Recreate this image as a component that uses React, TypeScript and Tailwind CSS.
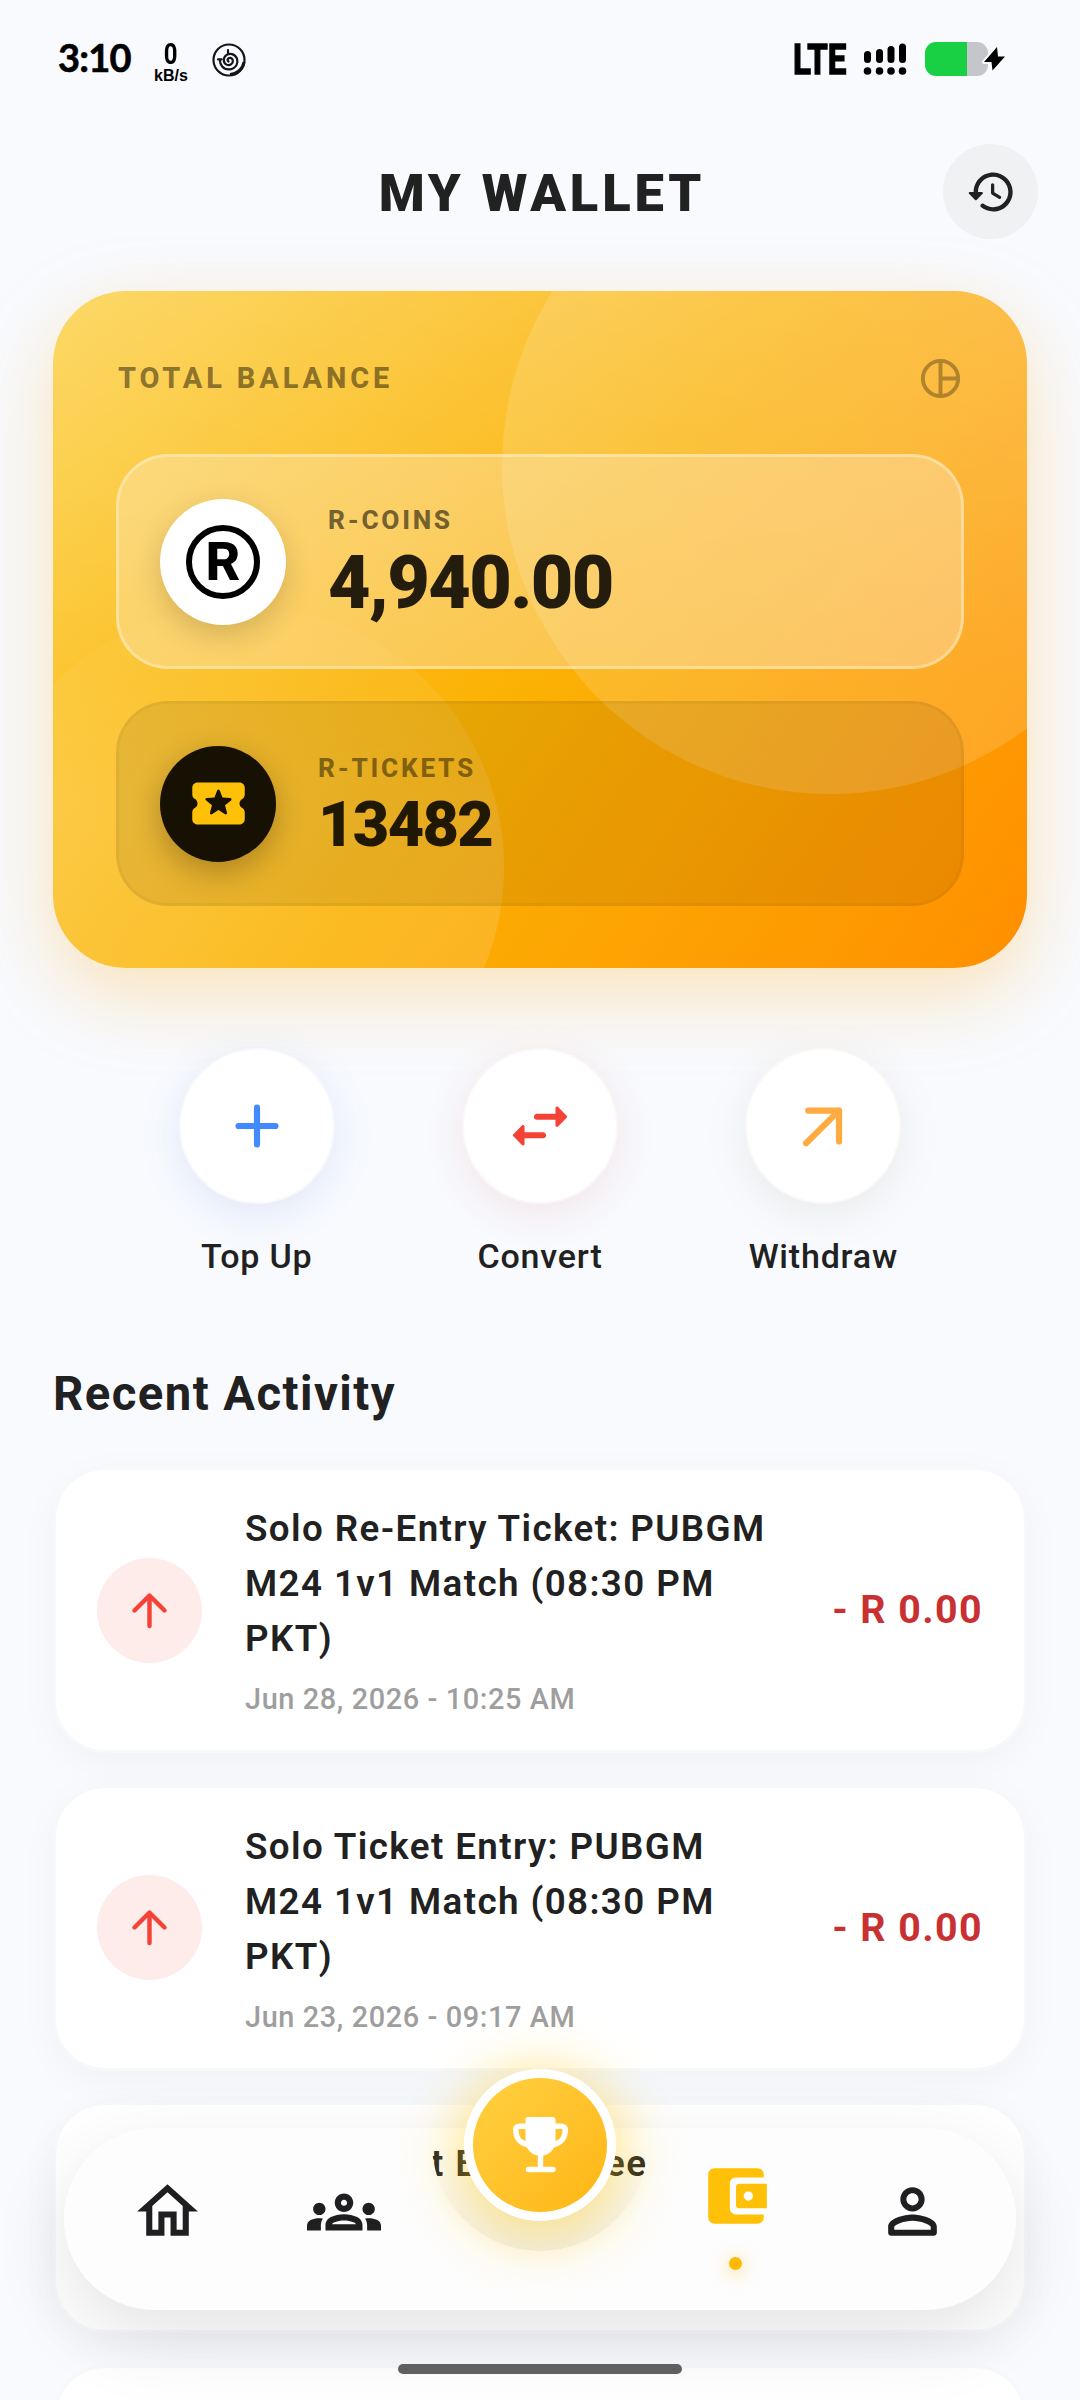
import type { ReactNode } from 'react';

interface Transaction {
  title: string;
  date: string;
  amount: string;
}

const transactions: Transaction[] = [
  {
    title: 'Solo Re-Entry Ticket: PUBGM M24 1v1 Match (08:30 PM PKT)',
    date: 'Jun 28, 2026 - 10:25 AM',
    amount: '- R 0.00',
  },
  {
    title: 'Solo Ticket Entry: PUBGM M24 1v1 Match (08:30 PM PKT)',
    date: 'Jun 23, 2026 - 09:17 AM',
    amount: '- R 0.00',
  },
];

interface IconProps {
  className?: string;
  children: ReactNode;
}

function Icon({ className, children }: IconProps) {
  return (
    <svg viewBox="0 0 24 24" fill="currentColor" className={className}>
      {children}
    </svg>
  );
}

function StatusBar() {
  return (
    <div className="h-[116px] flex items-start justify-between text-black">
      <div className="flex items-start pl-[58px] pt-[34px]">
        <span className="w-[76px] whitespace-nowrap font-[Lato,sans-serif] font-bold text-[38px] leading-[46px] tracking-[-0.8px] [-webkit-text-stroke:0.6px_black]">3:10</span>
        <div className="ml-[19px] w-[36px] flex flex-col items-center pt-[4px]">
          <span className="font-bold text-[30px] leading-[31px] scale-x-80">0</span>
          <span className="font-['Liberation_Sans',sans-serif] font-bold text-[16px] leading-[13px]">kB/s</span>
        </div>
        <svg viewBox="0 0 36 36" className="ml-[22px] mt-[8px] w-[36px] h-[36px]" fill="none" stroke="#15161c">
          <circle cx="18" cy="18" r="15.5" strokeWidth="2.2" />
          <path
            d="M17.5 19.5c-1.8-1.2-.5-4 1.8-3.6c3 .5 3.4 4.5 1 6.3c-3 2.2-7.3.2-7.5-3.8c-.2-4.5 4.2-7.5 8.3-6.3c5 1.4 6.6 7 4.3 11.2c-3 5-10.5 5.5-14.2 1.2c-1.8-2.2-2.3-4-2.3-6.2M7 17.3h3.5M17 8v4.5"
            strokeWidth="2.2"
            strokeLinecap="round"
          />
          <path d="M33 20c-1 7-7 12-14 12.5" strokeWidth="3" />
        </svg>
      </div>
      <div className="flex items-start pt-[42px] pr-[74px]">
        <div className="w-[56px] h-[34px] mr-[14px]">
          <span className="block origin-left scale-x-[0.77] w-[80px] font-bold text-[43px] leading-[35px] [-webkit-text-stroke:1.5px_black]">LTE</span>
        </div>
        <svg viewBox="0 0 44 34" className="w-[44px] h-[34px] mr-[18px]">
          <rect x="1" y="9" width="7" height="12" rx="3.5" />
          <rect x="13" y="7" width="7" height="14" rx="3.5" />
          <rect x="24.5" y="4" width="7" height="17" rx="3.5" />
          <rect x="36" y="1.5" width="7" height="19.5" rx="3.5" />
          <circle cx="4.5" cy="29" r="3.8" />
          <circle cx="16.5" cy="29" r="3.8" />
          <circle cx="28" cy="29" r="3.8" />
          <circle cx="39.5" cy="29" r="3.8" />
        </svg>
        <svg viewBox="0 0 81 34" className="w-[81px] h-[34px]">
          <path d="M42 0h10a11 11 0 0 1 11 11v12a11 11 0 0 1-11 11h-10z" fill="#c5c6cb" />
          <path d="M42 0H11a11 11 0 0 0-11 11v12a11 11 0 0 0 11 11h31z" fill="#19d045" />
          <path
            d="M72 5L59 20h7.5l1 8.5L80 14.5h-7z"
            fill="black"
            stroke="#f8fafe"
            strokeWidth="4"
            strokeLinejoin="round"
            paintOrder="stroke"
          />
        </svg>
      </div>
    </div>
  );
}

function Header() {
  return (
    <header className="h-[175px] pt-[28px] flex items-start justify-between px-[42px]">
      <div className="w-[96px]" />
      <h1 className="pl-[3px] font-black text-[52.5px] leading-[99px] tracking-[3.9px] text-[#212121]">MY WALLET</h1>
      <div className="w-[95px] h-[95px] rounded-full bg-[#f0f1f3] flex items-center justify-center text-[#212121]">
        <Icon className="w-[52px] h-[52px]">
          <path d="M13.26 3C8.17 2.86 4 6.95 4 12H2.21c-.45 0-.67.54-.35.85l2.79 2.8c.2.2.51.2.71 0l2.79-2.8c.31-.31.09-.85-.36-.85H6c0-3.9 3.18-7.05 7.1-7 3.72.05 6.85 3.18 6.9 6.9.05 3.91-3.1 7.1-7 7.1-1.61 0-3.1-.55-4.28-1.48-.4-.31-.96-.28-1.32.08-.42.42-.39 1.13.08 1.49C9 20.29 10.91 21 13 21c5.05 0 9.14-4.17 9-9.26-.13-4.69-4.05-8.61-8.74-8.74zm-.51 5c-.41 0-.75.34-.75.75v3.68c0 .35.19.68.49.86l3.12 1.85c.36.21.82.09 1.03-.26.21-.36.09-.82-.26-1.03l-2.88-1.71v-3.4c0-.4-.34-.74-.75-.74z" />
        </Icon>
      </div>
    </header>
  );
}

function BalanceCard() {
  return (
    <section className="relative mx-[53px] h-[677px] rounded-[73px] shadow-[0_26px_80px_rgba(255,165,0,0.28)]">
      <div className="relative h-full overflow-hidden rounded-[73px] px-[63px] pt-[63px] bg-[linear-gradient(to_bottom,rgba(255,255,255,0.15),rgba(255,255,255,0)_58%),linear-gradient(124.8deg,#fcd24e_0%,#fbb204_50%,#ff8f00_100%)]">
        <div className="absolute -top-[153px] -right-[131px] w-[656px] h-[656px] rounded-full bg-white/15" />
        <div className="absolute -bottom-[162px] -left-[74px] w-[525px] h-[525px] rounded-full bg-[linear-gradient(to_bottom,rgba(255,255,255,0.02),rgba(255,255,255,0.12)_40%)]" />
        <div className="relative">
          <div className="flex items-center justify-between h-[48px] pt-px">
            <span className="pl-[2px] font-extrabold text-[28.9px] tracking-[3.9px] text-black/45">TOTAL BALANCE</span>
            <svg viewBox="0 0 24 24" className="w-[47px] h-[47px]" fill="none" stroke="rgba(0,0,0,0.3)" strokeWidth="2">
              <path d="M12 3a9 9 0 1 0 0 18a9 9 0 1 0 0-18zM12 4v16M13 12h7" />
            </svg>
          </div>

          <div className="mt-[52px] h-[215px] rounded-[52px] border-[3px] border-[#fff4d0]/45 bg-[#fbeed8]/35 flex items-center pl-[41px]">
            <div className="w-[126px] h-[126px] rounded-full bg-white shadow-[0_10px_30px_rgba(0,0,0,0.16)] flex items-center justify-center">
              <div className="w-[74px] h-[74px] rounded-full border-[6px] border-black flex items-center justify-center">
                <span className="font-extrabold text-[54px] leading-none text-black">R</span>
              </div>
            </div>
            <div className="ml-[42px] pt-[8px]">
              <p className="font-extrabold text-[26.25px] leading-[30px] tracking-[2.7px] text-black/55">R-COINS</p>
              <p className="mt-[4px] font-black text-[73.5px] leading-[88px] tracking-[-1.6px] text-[#241c0c]">4,940.00</p>
            </div>
          </div>

          <div className="mt-[32px] h-[205px] rounded-[52px] border-[3px] border-black/4 bg-black/8 flex items-center pl-[41px]">
            <div className="w-[116px] h-[116px] rounded-full bg-[#171103] shadow-[0_10px_30px_rgba(0,0,0,0.25)] flex items-center justify-center text-[#ffc107]">
              <Icon className="w-[63px] h-[63px]">
                <path d="M20 12c0-.76.43-1.42 1.06-1.76.6-.33.94-1.01.94-1.7V6c0-1.1-.9-2-2-2H4c-1.1 0-1.99.89-1.99 1.99v2.55c0 .69.33 1.37.94 1.69C3.58 10.58 4 11.24 4 12s-.43 1.43-1.06 1.76c-.6.33-.94 1.01-.94 1.7V18c0 1.1.9 2 2 2h16c1.1 0 2-.9 2-2v-2.54c0-.69-.34-1.37-.94-1.7-.63-.34-1.06-1-1.06-1.76zm-5.5 4.1L12 14.5l-2.5 1.61c-.38.24-.87-.11-.75-.55l.75-2.88-2.3-1.88c-.35-.29-.17-.86.29-.89l2.96-.17 1.08-2.75c.17-.42.77-.42.93 0l1.08 2.76 2.96.17c.45.03.64.6.29.89l-2.3 1.88.76 2.86c.12.45-.37.8-.75.55z" />
              </Icon>
            </div>
            <div className="ml-[42px] pt-[8px]">
              <p className="font-extrabold text-[26.25px] leading-[30px] tracking-[2.7px] text-black/45">R-TICKETS</p>
              <p className="mt-[4px] font-black text-[63px] leading-[76px] tracking-[-1.7px] text-[#211803]">13482</p>
            </div>
          </div>
        </div>
      </div>
    </section>
  );
}

function QuickActions() {
  return (
    <section className="relative mt-[80px] px-[115px] grid grid-cols-3">
      <div className="flex flex-col items-center">
        <div className="w-[156px] h-[156px] rounded-full border-2 border-[#f7f9fd] bg-white shadow-[0_10px_40px_rgba(68,110,200,0.13)] flex items-center justify-center">
          <svg viewBox="0 0 24 24" className="w-[74px] h-[74px]" fill="none" stroke="#448aff" strokeWidth="2" strokeLinecap="round">
            <path d="M12 6v12M6 12h12" />
          </svg>
        </div>
        <span className="mt-[32px] font-medium text-[34px] leading-[40px] tracking-[0.8px] text-[#212121]">Top Up</span>
      </div>
      <div className="flex flex-col items-center">
        <div className="w-[156px] h-[156px] rounded-full border-2 border-[#fbf7f9] bg-white shadow-[0_10px_40px_rgba(200,67,54,0.11)] flex items-center justify-center text-[#f44336]">
          <Icon className="w-[74px] h-[74px]">
            <path d="M6.14 11.86l-2.78 2.79c-.19.2-.19.51 0 .71l2.78 2.79c.31.32.85.09.85-.35V16H13c.55 0 1-.45 1-1s-.45-1-1-1H6.99v-1.79c0-.45-.54-.67-.85-.35zm14.51-3.21l-2.78-2.79c-.31-.32-.85-.09-.85.35V8H11c-.55 0-1 .45-1 1s.45 1 1 1h6.01v1.79c0 .45.54.67.85.35l2.78-2.79c.2-.19.2-.51.01-.7z" />
          </Icon>
        </div>
        <span className="mt-[32px] font-medium text-[34px] leading-[40px] tracking-[0.8px] text-[#212121]">Convert</span>
      </div>
      <div className="flex flex-col items-center">
        <div className="w-[156px] h-[156px] rounded-full border-2 border-[#faf9f8] bg-white shadow-[0_10px_40px_rgba(150,130,90,0.13)] flex items-center justify-center">
          <svg viewBox="0 0 24 24" className="w-[74px] h-[74px]" fill="none" stroke="#ffab40" strokeWidth="2" strokeLinecap="round" strokeLinejoin="round">
            <path d="M7.2 7H17.200V17M17.200 7L6.500 17.600" />
          </svg>
        </div>
        <span className="mt-[32px] font-medium text-[34px] leading-[40px] tracking-[0.8px] text-[#212121]">Withdraw</span>
      </div>
    </section>
  );
}

function TransactionCard({ title, date, amount }: Transaction) {
  return (
    <li className="rounded-[52px] border-[3px] border-[#f6f8fa] bg-white bg-clip-padding shadow-[0_10px_40px_rgba(0,0,0,0.035)] flex items-center px-[41px] pt-[31px] pb-[31px]">
      <div className="w-[105px] h-[105px] shrink-0 rounded-full bg-[#feeceb] flex items-center justify-center">
        <svg viewBox="0 0 24 24" className="w-[53px] h-[53px]" fill="none" stroke="#f44336" strokeWidth="2" strokeLinecap="round" strokeLinejoin="round">
          <path d="M12 19V5.500M5.200 12l6.800-6.800l6.800 6.800" />
        </svg>
      </div>
      <div className="ml-[43px] w-[540px]">
        <p className="font-semibold text-[36.75px] leading-[55px] tracking-[1.4px] text-[#212121]">{title}</p>
        <p className="mt-[13px] font-medium text-[28.9px] leading-[40px] tracking-[0.6px] text-[#9e9e9e]">{date}</p>
      </div>
      <span className="ml-auto whitespace-nowrap font-bold text-[39.4px] leading-[46px] tracking-[1.4px] text-[#c93032]">{amount}</span>
    </li>
  );
}

function RecentActivity() {
  return (
    <section className="mt-[83px] px-[53px]">
      <h2 className="font-bold text-[47.25px] leading-[70px] tracking-[1.45px] text-[#212121]">Recent Activity</h2>
      <ul className="mt-[38px] flex flex-col gap-[31.6px]">
        {transactions.map((t) => (
          <TransactionCard key={t.date} {...t} />
        ))}
        <li className="h-[231px] rounded-[52px] border-[3px] border-[#f6f8fa] bg-white bg-clip-padding shadow-[0_10px_40px_rgba(0,0,0,0.035)] pl-[189px] pt-[31px]">
          <p className="font-semibold text-[36.75px] leading-[55px] tracking-[1.4px] text-[#212121]">Solo Ticket Entry: Free</p>
        </li>
        <li className="h-[231px] rounded-[52px] border-[3px] border-[#f6f8fa] bg-white bg-clip-padding" />
      </ul>
    </section>
  );
}

function BottomNav() {
  return (
    <nav className="absolute left-[64px] top-[2128px] w-[952px] h-[182px]">
      <div className="absolute inset-0 rounded-full shadow-[0_26px_80px_rgba(0,0,0,0.11)]" />
      <div className="absolute left-[368px] -top-[93px] w-[216px] h-[216px] rounded-full bg-[linear-gradient(to_bottom,transparent_50%,rgba(0,0,0,0.06)_100%)]" />
      {/* pill with a round notch under the trophy button */}
      <div className="absolute inset-0 rounded-full bg-[#fdfdfd] [mask-image:radial-gradient(circle_at_476px_15px,transparent_107.5px,black_108.5px)]" />
      <div className="relative h-full flex px-[15px] text-[#1f1f21]">
        <div className="w-[177px] flex justify-center pt-[47px]">
          <Icon className="w-[73px] h-[73px]">
            <path d="M12 5.69l5 4.5V18h-2v-6H9v6H7v-7.81l5-4.5M12 3L2 12h3v8h6v-6h2v6h6v-8h3L12 3z" />
          </Icon>
        </div>
        <div className="w-[175px] flex justify-center pt-[47px]">
          <Icon className="w-[74px] h-[74px]">
            <path d="M4 13c1.1 0 2-.9 2-2s-.9-2-2-2-2 .9-2 2 .9 2 2 2zm1.13 1.1c-.37-.06-.74-.1-1.13-.1-.99 0-1.93.21-2.78.58C.48 14.9 0 15.62 0 16.43V18h4.5v-1.61c0-.83.23-1.61.63-2.29zM20 13c1.1 0 2-.9 2-2s-.9-2-2-2-2 .9-2 2 .9 2 2 2zm4 3.43c0-.81-.48-1.53-1.22-1.85-.85-.37-1.79-.58-2.78-.58-.39 0-.76.04-1.13.1.4.68.63 1.46.63 2.29V18H24v-1.57zm-7.76-2.78c-1.17-.52-2.61-.9-4.24-.9s-3.07.39-4.24.9C6.68 14.13 6 15.21 6 16.39V18h12v-1.61c0-1.18-.68-2.26-1.76-2.74zM8.07 16c.09-.23.13-.39.91-.69.97-.38 1.99-.56 3.02-.56s2.05.18 3.02.56c.77.3.81.46.91.69H8.07zM12 8c.55 0 1 .45 1 1s-.45 1-1 1-1-.45-1-1 .45-1 1-1m0-2c-1.66 0-3 1.34-3 3s1.34 3 3 3 3-1.34 3-3-1.34-3-3-3z" />
          </Icon>
        </div>
        <div className="w-[216px]" />
        <div className="w-[177px] flex flex-col items-center pt-[31px] text-[#ffc107]">
          <Icon className="w-[74px] h-[74px]">
            <path d="M10 16V8c0-1.1.89-2 2-2h9V5c0-1.1-.9-2-2-2H5c-1.11 0-2 .9-2 2v14c0 1.1.89 2 2 2h14c1.1 0 2-.9 2-2v-1h-9c-1.11 0-2-.9-2-2zm3-8c-.55 0-1 .45-1 1v6c0 .55.45 1 1 1h9V8h-9zm3 5.5c-.83 0-1.5-.67-1.5-1.5s.67-1.5 1.5-1.5 1.5.67 1.5 1.5-.67 1.5-1.5 1.5z" />
          </Icon>
          <span className="mt-[24px] w-[13px] h-[13px] rounded-full bg-[#ffb905] shadow-[0_3px_16px_4px_rgba(255,185,0,0.25)]" />
        </div>
        <div className="w-[176px] flex justify-center pt-[47px]">
          <Icon className="w-[73px] h-[73px]">
            <path d="M12 6c1.1 0 2 .9 2 2s-.9 2-2 2-2-.9-2-2 .9-2 2-2m0 9c2.7 0 5.8 1.29 6 2v1H6v-.99c.2-.72 3.3-2.01 6-2.01m0-11C9.79 4 8 5.79 8 8s1.79 4 4 4 4-1.79 4-4-1.79-4-4-4zm0 9c-2.67 0-8 1.34-8 4v2c0 .55.45 1 1 1h14c.55 0 1-.45 1-1v-2c0-2.66-5.33-4-8-4z" />
          </Icon>
        </div>
      </div>
      <button className="absolute left-[400px] -top-[59px] w-[152px] h-[152px] rounded-full bg-white shadow-[0_10px_54px_10px_rgba(255,200,20,0.48)] flex items-center justify-center">
        <span className="w-[134px] h-[134px] rounded-full bg-linear-to-br from-[#ffd040] to-[#ffb60a] flex items-center justify-center">
          <svg viewBox="0 0 55 56" className="w-[55px] h-[56px]" fill="none" stroke="white" strokeWidth="5.4" strokeLinecap="round" strokeLinejoin="round">
            <path d="M15 0h25a2.5 2.5 0 0 1 2.5 2.5V24a15 15 0 0 1-30 0V2.5a2.5 2.5 0 0 1 2.5-2.5z" fill="white" stroke="none" />
            <path d="M13 9.2H6.5c-2.2 0-3.8 1.3-3.8 3.5c0 8 4.3 13.3 11.3 14.8M42 9.2h6.5c2.2 0 3.8 1.3 3.8 3.5c0 8-4.3 13.3-11.3 14.8M27.5 38v13M15.5 52.5h24.5" />
          </svg>
        </span>
      </button>
    </nav>
  );
}

export default function App() {
  return (
    <main className="relative w-[1080px] h-[2400px] overflow-hidden bg-[#f8fafe] font-[Roboto,sans-serif]">
      <StatusBar />
      <Header />
      <BalanceCard />
      <QuickActions />
      <RecentActivity />
      <BottomNav />
      <div className="absolute left-[398px] top-[2364px] w-[284px] h-[10px] rounded-full bg-[#606060]" />
    </main>
  );
}
